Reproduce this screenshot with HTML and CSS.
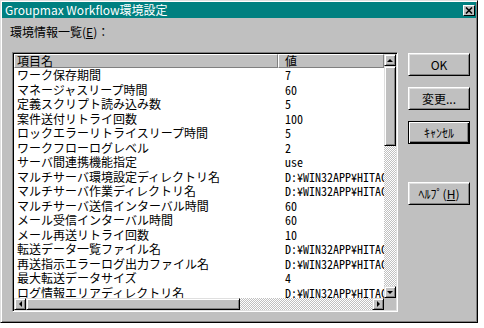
FILE: index.html
```html
<!DOCTYPE html>
<html lang="ja">
<head>
    <meta charset="UTF-8">
    <title>Groupmax Workflow環境設定</title>
    <link rel="stylesheet" href="styles.css">
</head>
<body>

    <div class="window">
        <div class="titlebar">
            <span class="title">Groupmax Workflow環境設定</span>
            <span class="close">
                <svg width="8" height="7" viewBox="0 0 8 7"><path d="M1 0.5 L7 6.5 M7 0.5 L1 6.5" stroke="#000" stroke-width="1.6"/></svg>
            </span>
        </div>

        <div class="content">
            <div class="main">
                <div class="caption">環境情報一覧(<u>E</u>)：</div>

                <div class="listbox">
                    <div class="list-area">
                        <div class="list-view">
                            <div class="list-head">
                                <div class="head-cell col-name">項目名</div>
                                <div class="head-cell col-value">値</div>
                            </div>
                            <div class="list-rows">
                                <div class="row"><span class="col-name">ワーク保存期間</span><span class="col-value">7</span></div>
                                <div class="row"><span class="col-name">マネージャスリープ時間</span><span class="col-value">60</span></div>
                                <div class="row"><span class="col-name">定義スクリプト読み込み数</span><span class="col-value">5</span></div>
                                <div class="row"><span class="col-name">案件送付リトライ回数</span><span class="col-value">100</span></div>
                                <div class="row"><span class="col-name">ロックエラーリトライスリープ時間</span><span class="col-value">5</span></div>
                                <div class="row"><span class="col-name">ワークフローログレベル</span><span class="col-value">2</span></div>
                                <div class="row"><span class="col-name">サーバ間連携機能指定</span><span class="col-value">use</span></div>
                                <div class="row"><span class="col-name">マルチサーバ環境設定ディレクトリ名</span><span class="col-value">D:¥WIN32APP¥HITACHI</span></div>
                                <div class="row"><span class="col-name">マルチサーバ作業ディレクトリ名</span><span class="col-value">D:¥WIN32APP¥HITACHI</span></div>
                                <div class="row"><span class="col-name">マルチサーバ送信インターバル時間</span><span class="col-value">60</span></div>
                                <div class="row"><span class="col-name">メール受信インターバル時間</span><span class="col-value">60</span></div>
                                <div class="row"><span class="col-name">メール再送リトライ回数</span><span class="col-value">10</span></div>
                                <div class="row"><span class="col-name">転送データ一覧ファイル名</span><span class="col-value">D:¥WIN32APP¥HITACHI</span></div>
                                <div class="row"><span class="col-name">再送指示エラーログ出力ファイル名</span><span class="col-value">D:¥WIN32APP¥HITACHI</span></div>
                                <div class="row"><span class="col-name">最大転送データサイズ</span><span class="col-value">4</span></div>
                                <div class="row"><span class="col-name">ログ情報エリアディレクトリ名</span><span class="col-value">D:¥WIN32APP¥HITACHI</span></div>
                            </div>
                        </div>
                        <div class="vscroll">
                            <div class="arrow"><i class="tri-up"></i></div>
                            <div class="thumb v-thumb"></div>
                            <div class="track"></div>
                            <div class="arrow"><i class="tri-down"></i></div>
                        </div>
                    </div>
                    <div class="hscroll-row">
                        <div class="hscroll">
                            <div class="arrow"><i class="tri-left"></i></div>
                            <div class="thumb h-thumb"></div>
                            <div class="track"></div>
                            <div class="arrow"><i class="tri-right"></i></div>
                        </div>
                        <div class="corner"></div>
                    </div>
                </div>
            </div>

            <div class="buttons">
                <div class="btn">OK</div>
                <div class="btn">変更...</div>
                <div class="btn default">ｷｬﾝｾﾙ</div>
                <div class="btn help">ﾍﾙﾌﾟ(<u>H</u>)</div>
            </div>
        </div>
    </div>

</body>
</html>
```

FILE: styles.css
```css
* { margin: 0; padding: 0; box-sizing: border-box; }
body { background: #fff; font-family: "Noto Sans CJK JP", "Liberation Sans", sans-serif; font-size: 12px; color: #000; }

/* window frame */
.window { width: 478px; height: 323px; background: #c0c0c0; border: 1px solid; border-color: #dfdfdf #000 #000 #dfdfdf; box-shadow: inset 1px 1px #fff, inset -1px -1px #808080; padding: 1px; display: flex; flex-direction: column; }
.titlebar { height: 16px; background: #008080; display: flex; align-items: center; justify-content: space-between; padding-left: 3px; padding-right: 1px; }
.title { color: #fff; font-size: 12px; line-height: 16px; }
.close { width: 12px; height: 11px; background: #c0c0c0; border: 1px solid; border-color: #fff #000 #000 #fff; display: flex; align-items: center; justify-content: center; }

.content { flex: 1; display: flex; padding: 7px 0 0 8px; }
.caption { line-height: 14px; height: 14px; }
.listbox { width: 386px; height: 260px; margin: 13px 0 0 2px; border: 1px solid; border-color: #808080 #fff #fff #808080; box-shadow: inset 1px 1px #000, inset -1px -1px #dfdfdf; padding: 1px; background: #fff; }

/* list */
.list-area { display: flex; height: 244px; }
.list-view { width: 370px; overflow: hidden; }
.list-head { display: flex; height: 14px; }
.head-cell { flex: none; background: #c0c0c0; border: 1px solid; border-color: #fff #808080 #808080 #fff; line-height: 12px; white-space: nowrap; }
.head-cell.col-name { width: 264px; padding-left: 2px; }
.head-cell.col-value { width: 106px; padding-left: 6px; }
.row { display: flex; height: 14.5px; line-height: 14.5px; white-space: nowrap; }
.row .col-name { flex: none; width: 264px; padding-left: 3px; overflow: hidden; }
.row .col-value { flex: none; padding-left: 7px; font-family: "Noto Sans Mono CJK JP", "Liberation Mono", monospace; }

/* scrollbars */
.vscroll { width: 12px; display: flex; flex-direction: column; }
.hscroll-row { display: flex; height: 12px; }
.hscroll { width: 370px; display: flex; }
.corner { width: 12px; background: #c0c0c0; }
.arrow, .thumb { background: #c0c0c0; border: 1px solid; border-color: #dfdfdf #000 #000 #dfdfdf; box-shadow: inset 1px 1px #fff, inset -1px -1px #808080; }
.arrow { width: 12px; height: 12px; display: flex; align-items: center; justify-content: center; flex: none; }
.v-thumb { height: 80px; }
.h-thumb { width: 214px; }
.track { flex: 1; background-color: #fff; background-image: conic-gradient(#c0c0c0 25%, #fff 0 50%, #c0c0c0 0 75%, #fff 0); background-size: 2px 2px; }
.tri-up, .tri-down, .tri-left, .tri-right { display: block; width: 0; height: 0; border: 3px solid transparent; }
.tri-up { border-bottom-color: #000; border-top-width: 0; }
.tri-down { border-top-color: #000; border-bottom-width: 0; }
.tri-left { border-right-color: #000; border-left-width: 0; }
.tri-right { border-left-color: #000; border-right-width: 0; }

/* buttons */
.buttons { display: flex; flex-direction: column; gap: 11px; margin-left: 10px; padding-top: 28px; }
.btn { width: 62px; height: 23px; background: #c0c0c0; border: 1px solid; border-color: #fff #000 #000 #fff; box-shadow: inset 1px 1px #dfdfdf, inset -1px -1px #808080; display: flex; align-items: center; justify-content: center; line-height: 14px; }
.btn.default { border-color: #000; box-shadow: inset 1px 1px #fff, inset -1px -1px #000, inset -2px -2px #808080; }
.btn.help { margin-top: 27px; }
```
